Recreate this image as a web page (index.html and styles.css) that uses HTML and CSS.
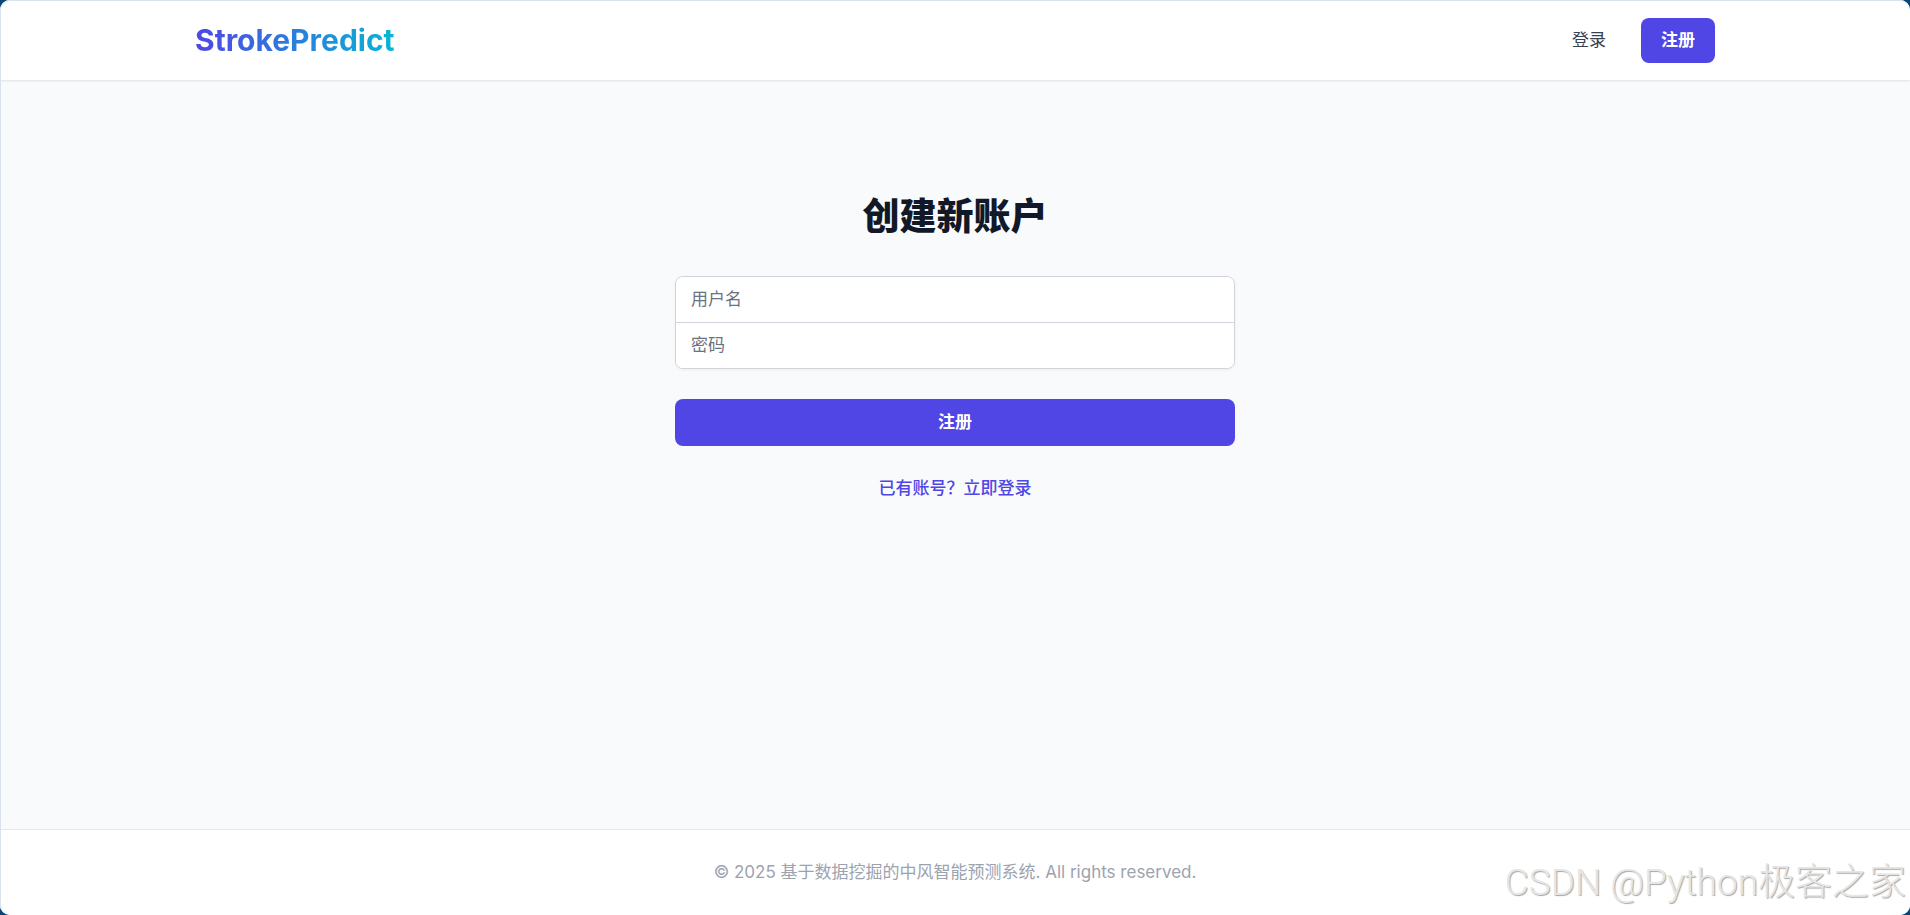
FILE: index.html
```
<!DOCTYPE html>
<html lang="zh-CN">
<head>
    <meta charset="UTF-8">
    <meta name="viewport" content="width=device-width, initial-scale=1.0">
    <title>注册 - StrokePredict</title>
    <link rel="stylesheet" href="styles.css">
</head>
<body>
    <div class="page">
        <!-- Navigation -->
        <header class="header">
            <nav class="nav">
                <a class="logo" href="#">StrokePredict</a>
                <div class="nav-links">
                    <a class="nav-login" href="#">登录</a>
                    <a class="nav-register" href="#">注册</a>
                </div>
            </nav>
        </header>

        <!-- Register Form -->
        <main class="main">
            <h2>创建新账户</h2>
            <form class="register-form" action="#" method="POST">
                <div class="fields">
                    <input type="text" name="username" aria-label="用户名" placeholder="用户名" required>
                    <input type="password" name="password" aria-label="密码" placeholder="密码" required>
                </div>
                <button type="submit">注册</button>
                <a class="login-link" href="#">已有账号？立即登录</a>
            </form>
        </main>

        <footer class="footer">
            <p>© 2025 基于数据挖掘的中风智能预测系统. All rights reserved.</p>
        </footer>

        <div class="watermark">CSDN @Python极客之家</div>
    </div>
</body>
</html>
```
FILE: styles.css
```
/* General styling */
* {
    box-sizing: border-box;
}
body {
    margin: 0;
    background-color: #0b4678;
    font-family: Inter, "Noto Sans CJK SC", sans-serif;
    font-size: 17px;
    line-height: 25px;
}
a {
    text-decoration: none;
}
.page {
    position: relative;
    display: flex;
    flex-direction: column;
    min-height: 100vh;
    border-radius: 10px;
    background-color: #f9fafc;
    overflow: hidden;
}
/* Thin edge drawn over the page content */
.page::after {
    content: "";
    position: absolute;
    inset: 0;
    border-top: 1px solid #dae3ed;
    border-left: 1px solid #dae3ed;
    border-radius: 10px;
    pointer-events: none;
}
/* Navigation */
.header {
    background-color: #fff;
    box-shadow: 0 1px 2px rgba(0, 0, 0, 0.1);
}
.nav {
    display: flex;
    align-items: center;
    justify-content: space-between;
    max-width: 1600px;
    height: 80px;
    margin: 0 auto;
    padding: 0 40px;
}
.logo {
    font-size: 30px;
    line-height: 40px;
    font-weight: 700;
    color: transparent;
    background: linear-gradient(to right, #4f46e5, #06b6d4);
    -webkit-background-clip: text;
    background-clip: text;
}
.nav-links {
    display: flex;
    align-items: center;
    gap: 35px;
}
.nav-login {
    color: #374151;
}
.nav-register {
    padding: 10px 20px;
    border-radius: 8px;
    background-color: #4f46e5;
    color: #fff;
    font-weight: 600;
}
/* Form styling */
.main {
    flex: 1;
    width: 100%;
    max-width: 560px;
    margin: 0 auto;
    padding: 112px 0 60px;
}
h2 {
    margin: 0 0 34px;
    font-size: 37px;
    line-height: 50px;
    font-weight: 800;
    color: #111827;
    text-align: center;
}
.register-form {
    display: flex;
    flex-direction: column;
}
.fields {
    display: flex;
    flex-direction: column;
    margin-bottom: 30px;
    border: 1px solid #d1d5db;
    border-radius: 8px;
    background-color: #fff;
    box-shadow: 0 1px 3px rgba(0, 0, 0, 0.06);
    overflow: hidden;
}
.fields input {
    width: 100%;
    padding: 10px 15px;
    border: none;
    background-color: #fff;
    font: inherit;
    color: #111827;
}
.fields input + input {
    border-top: 1px solid #d1d5db;
}
.fields input::placeholder {
    color: #6b7280;
}
.register-form button {
    margin-bottom: 30px;
    padding: 11px 20px;
    border: none;
    border-radius: 8px;
    background-color: #4f46e5;
    color: #fff;
    font: inherit;
    font-weight: 600;
    cursor: pointer;
}
.login-link {
    align-self: center;
    color: #4f46e5;
    font-weight: 500;
}
/* Footer */
.footer {
    padding: 30px 40px;
    border-top: 1px solid #e5e7eb;
    background-color: #fff;
    text-align: center;
    color: #9ca3af;
}
.footer p {
    margin: 0;
}
.watermark {
    position: absolute;
    right: 4px;
    bottom: 8px;
    font-family: Roboto, "Noto Sans CJK SC", sans-serif;
    font-size: 37px;
    line-height: 48px;
    font-weight: 300;
    color: #e6e6e6;
    text-shadow: 1px 1px 1px #a6a6a6;
}
```
